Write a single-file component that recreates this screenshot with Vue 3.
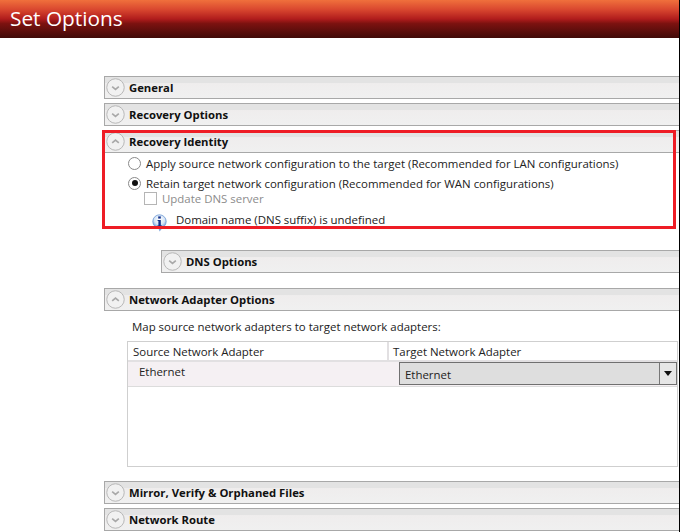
<script setup>
const chevronDown = 'M6.5 9 L10 12 L13.5 9'
const chevronUp = 'M6.5 11.5 L10 8.5 L13.5 11.5'
</script>

<template>
  <div class="page">
    <header class="title-bar"><h1>Set Options</h1></header>
    <main class="content">
      <section class="bar first">
        <svg class="toggle" viewBox="0 0 20 20"><circle cx="10" cy="10" r="9.2" /><path :d="chevronDown" /></svg>
        <span>General</span>
      </section>
      <section class="bar gap">
        <svg class="toggle" viewBox="0 0 20 20"><circle cx="10" cy="10" r="9.2" /><path :d="chevronDown" /></svg>
        <span>Recovery Options</span>
      </section>

      <div class="identity">
        <section class="bar">
          <svg class="toggle" viewBox="0 0 20 20"><circle cx="10" cy="10" r="9.2" /><path :d="chevronUp" /></svg>
          <span>Recovery Identity</span>
        </section>
        <div class="identity-body">
          <label class="radio-row"><i class="radio"></i>Apply source network configuration to the target (Recommended for LAN configurations)</label>
          <label class="radio-row second"><i class="radio on"></i>Retain target network configuration (Recommended for WAN configurations)</label>
          <label class="check-row"><i class="check"></i>Update DNS server</label>
          <div class="info-row">
            <svg class="info" viewBox="0 0 16 18">
              <defs>
                <radialGradient id="ib" cx="0.5" cy="0.35" r="0.65">
                  <stop offset="0" stop-color="#ffffff" />
                  <stop offset="0.6" stop-color="#d5e4f6" />
                  <stop offset="1" stop-color="#5f93d8" />
                </radialGradient>
              </defs>
              <circle cx="7.5" cy="7.5" r="6.7" fill="url(#ib)" stroke="#6f9bd6" stroke-width="0.8" />
              <rect x="6.2" y="2.4" width="2.6" height="2.2" fill="#12308c" />
              <path d="M5.6 6 H8.8 V11.4 H10 V12.6 H5.4 V11.4 H6.4 V7.1 H5.6 Z" fill="#12308c" />
              <path d="M6.5 14.6 L10 14.6 L7.6 17.6 Z" fill="#7fa6de" />
            </svg>
            <span>Domain name (DNS suffix) is undefined</span>
          </div>
        </div>
        <div class="highlight"></div>
      </div>

      <section class="bar dns">
        <svg class="toggle" viewBox="0 0 20 20"><circle cx="10" cy="10" r="9.2" /><path :d="chevronDown" /></svg>
        <span>DNS Options</span>
      </section>

      <section class="bar net">
        <svg class="toggle" viewBox="0 0 20 20"><circle cx="10" cy="10" r="9.2" /><path :d="chevronUp" /></svg>
        <span>Network Adapter Options</span>
      </section>
      <p class="map">Map source network adapters to target network adapters:</p>
      <div class="table">
        <div class="thead">
          <div class="th src">Source Network Adapter</div>
          <div class="th target">Target Network Adapter</div>
        </div>
        <div class="trow">
          <div class="td-src">Ethernet</div>
          <div class="td-target">
            <div class="combo">
              <span class="combo-text">Ethernet</span>
              <span class="combo-btn"><i class="arrow"></i></span>
            </div>
          </div>
        </div>
      </div>

      <section class="bar mirror">
        <svg class="toggle" viewBox="0 0 20 20"><circle cx="10" cy="10" r="9.2" /><path :d="chevronDown" /></svg>
        <span>Mirror, Verify &amp; Orphaned Files</span>
      </section>
      <section class="bar gap">
        <svg class="toggle" viewBox="0 0 20 20"><circle cx="10" cy="10" r="9.2" /><path :d="chevronDown" /></svg>
        <span>Network Route</span>
      </section>
    </main>
  </div>
</template>

<style>
html, body { margin: 0; background: #fff; }
</style>

<style scoped>
.page {
  width: 680px;
  height: 532px;
  overflow: hidden;
  box-sizing: border-box;
  border-right: 1px solid #000;
  background: #fff;
  font-family: "Open Sans", "Noto Sans", sans-serif;
  font-size: 11.45px;
  color: #222;
}
.title-bar {
  height: 38px;
  background: linear-gradient(#f0703c 0%, #d9472f 25%, #b01c1c 50%, #7c1210 62%, #400a08 100%);
}
.title-bar h1 {
  margin: 0;
  padding-left: 10px;
  font-size: 20.8px;
  font-weight: 400;
  line-height: 37px;
  color: #fff;
}
.content { padding-left: 104px; }
.bar {
  box-sizing: border-box;
  height: 23px;
  display: flex;
  align-items: center;
  gap: 4px;
  padding-left: 1px;
  border: 1px solid #a8a8a8;
  border-right: 0;
  background: linear-gradient(#e3e3e3 0%, #e3e3e3 30%, #efeded 31%, #f0f0f0 100%);
  font-weight: 700;
  font-size: 11.3px;
  color: #111;
}
.toggle { width: 19px; height: 19px; flex: none; }
.toggle circle { fill: #f1f1f1; stroke: #b4b4b4; stroke-width: 1; }
.toggle path { fill: none; stroke: #a8a8a8; stroke-width: 1.7; }
.first { margin-top: 38px; }
.gap { margin-top: 4px; }
.identity { position: relative; margin-top: 4px; height: 99px; }
.identity-body { padding-left: 24px; }
.radio-row { display: flex; align-items: center; gap: 5px; height: 16px; }
.radio-row:first-child { margin-top: 2px; }
.radio-row.second { margin-top: 4px; }
.radio {
  width: 13px; height: 13px; box-sizing: border-box;
  border: 1px solid #8a8a8a; border-radius: 50%; background: #fff; position: relative;
}
.radio.on::after {
  content: ""; position: absolute; left: 2.5px; top: 2.5px; width: 6px; height: 6px; border-radius: 50%; background: #111;
}
.check-row { display: flex; align-items: center; gap: 5px; height: 16px; margin-top: -1px; margin-left: 16px; color: #8c8c8c; }
.check { width: 13px; height: 13px; box-sizing: border-box; border: 1px solid #b5b5b5; background: #fff; }
.info-row { display: flex; align-items: center; gap: 8px; margin-left: 24px; height: 17px; margin-top: 5px; }
.info { width: 16px; height: 18px; flex: none; position: relative; top: 3px; }
.highlight {
  position: absolute; left: -2px; top: 0; width: 574px; height: 99px;
  box-sizing: border-box; border: 3px solid #ee1c25; pointer-events: none;
}
.dns { margin-left: 57px; margin-top: 21px; }
.net { margin-top: 15px; }
.map { margin: 8px 0 0 28px; line-height: 16px; height: 16px; }
.table {
  box-sizing: border-box;
  margin: 6px 0 0 23px;
  height: 126px;
  width: 551px;
  border: 1px solid #cfcfcf;
}
.thead { display: flex; height: 18px; border-bottom: 2px solid #e2e0e2; }
.th { flex: 1; padding-left: 5px; line-height: 19px; }
.th.src { flex: none; width: 254px; border-right: 2px solid #e2e0e2; }
.th.target { padding-left: 4px; }
.trow { display: flex; height: 24px; background: #f5f0f3; border-bottom: 1px solid #dcdcdc; }
.td-src { width: 260px; padding: 0 0 0 11px; box-sizing: border-box; line-height: 19px; }
.td-target { flex: 1; padding: 0 0 0 11px; }
.combo {
  box-sizing: border-box; height: 23px; width: 278px; display: flex;
  border: 1px solid #707070; background: #dedede;
}
.combo-text { flex: 1; padding-left: 5px; line-height: 23px; }
.combo-btn { width: 16px; border-left: 1px solid #777; background: #e6e6e6; display: flex; align-items: center; justify-content: center; }
.arrow { width: 0; height: 0; border-left: 4.5px solid transparent; border-right: 4.5px solid transparent; border-top: 5px solid #111; }
.mirror { margin-top: 14px; }
</style>
